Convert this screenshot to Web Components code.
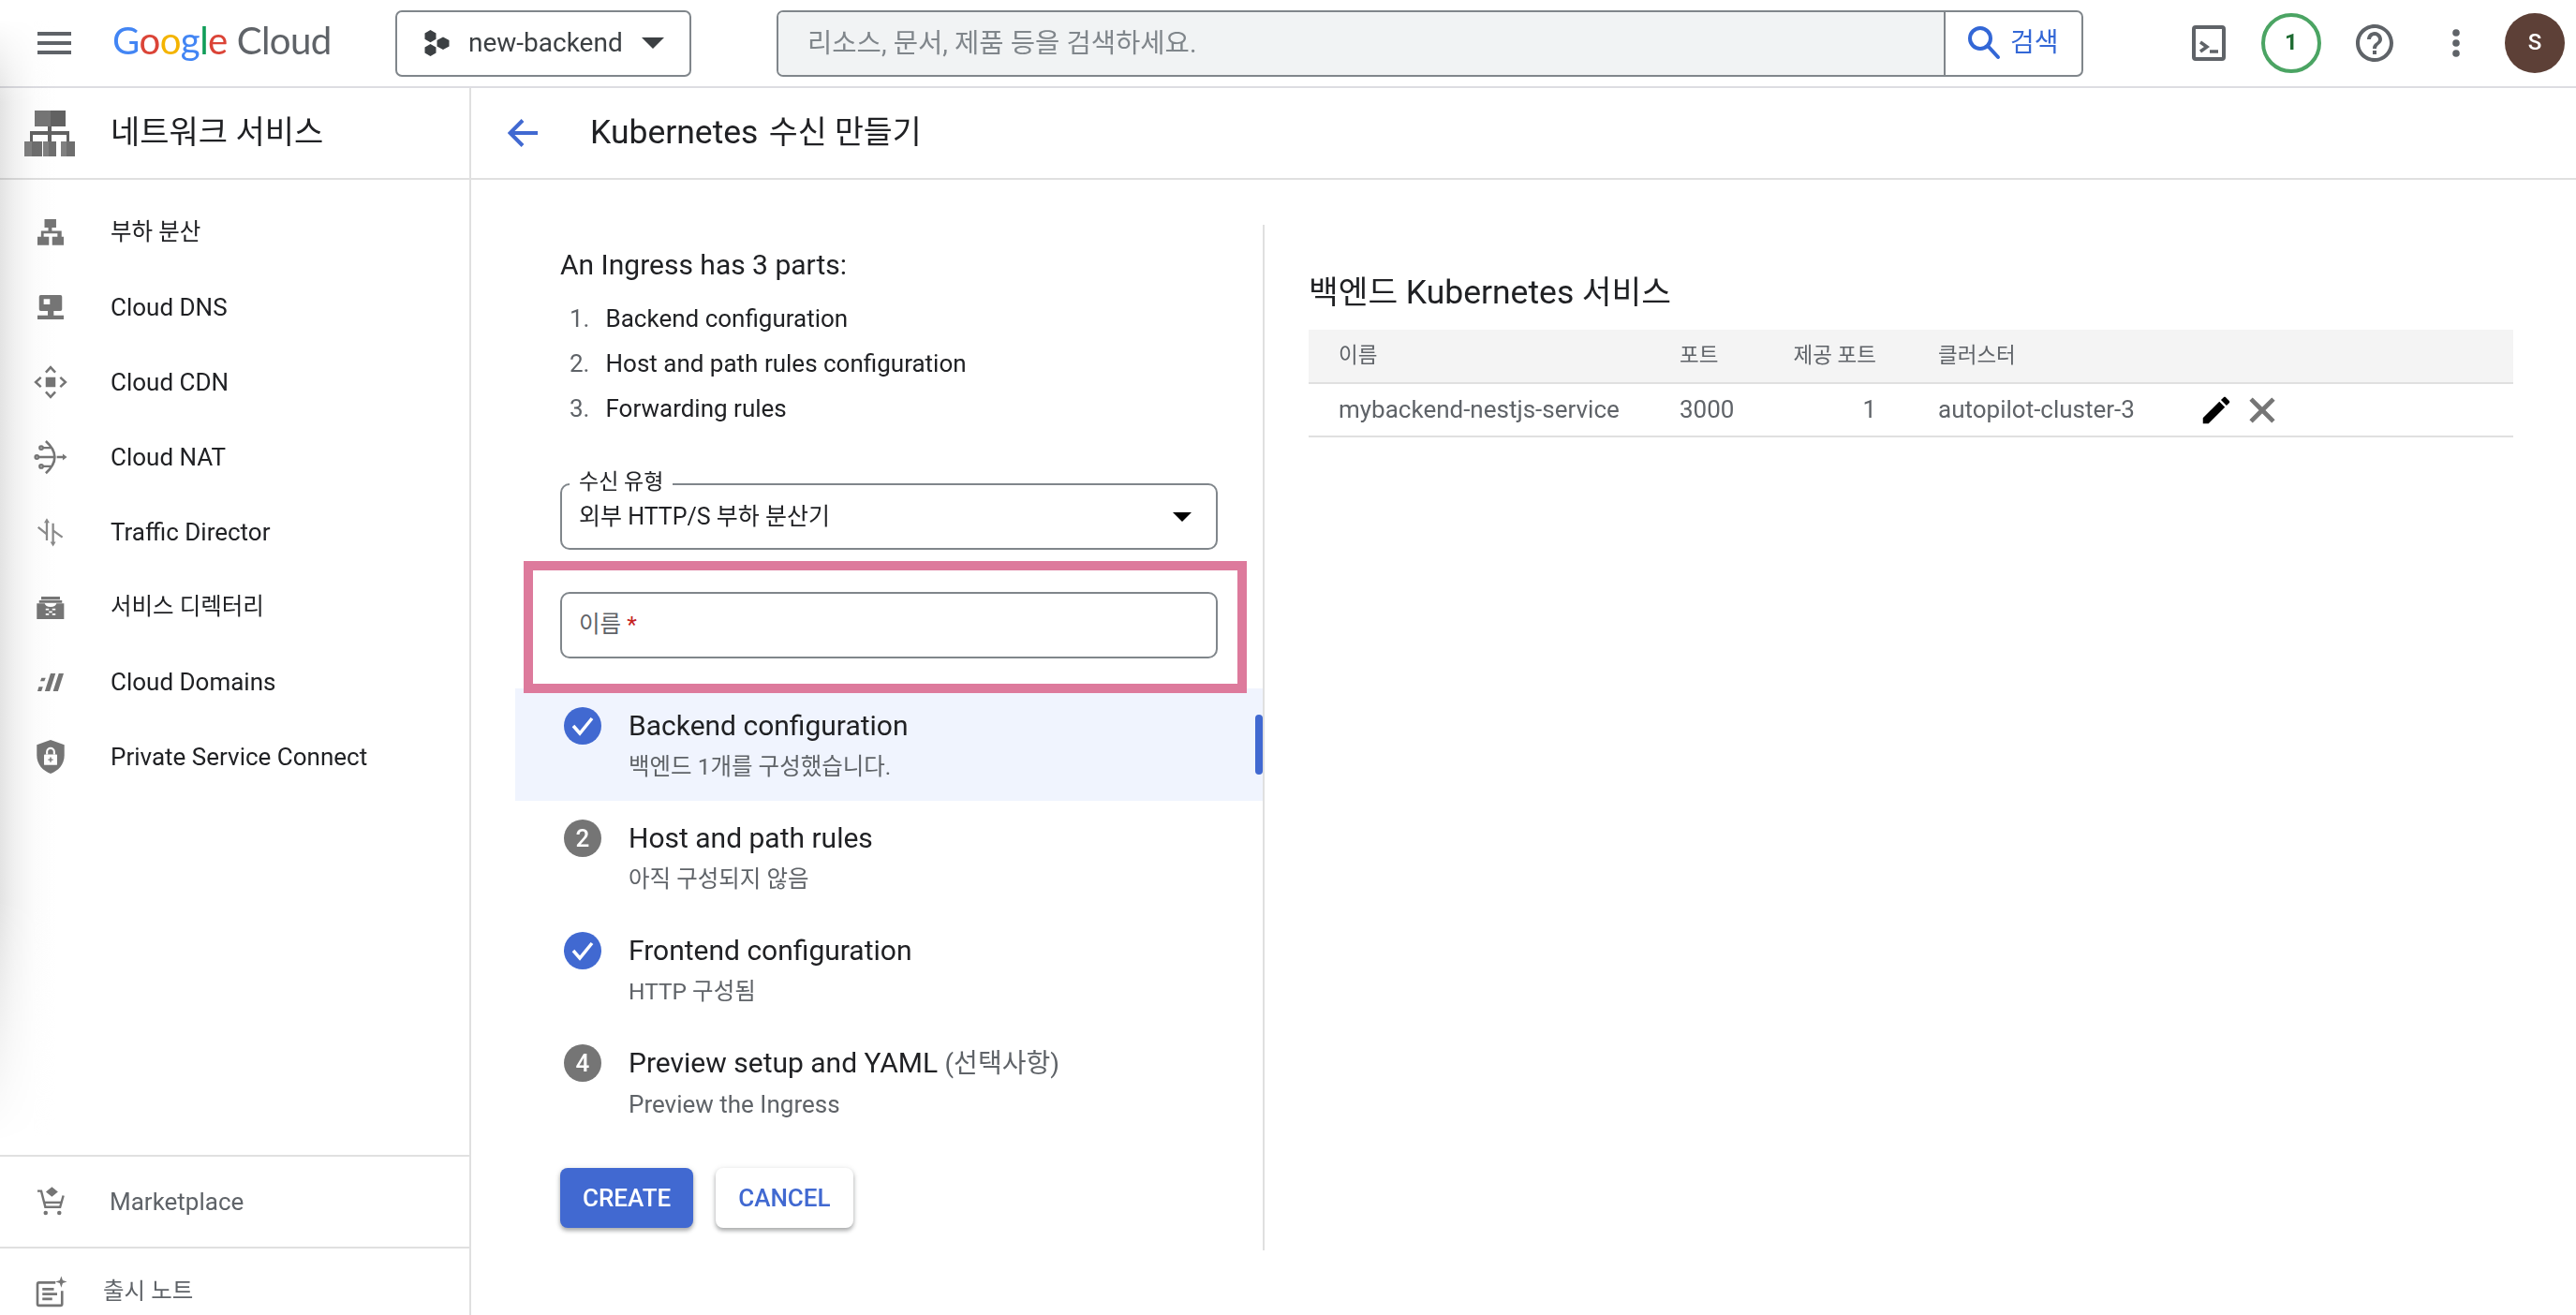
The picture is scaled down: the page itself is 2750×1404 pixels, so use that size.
<!DOCTYPE html>
<html lang="ko">
<head>
<meta charset="utf-8">
<title>Kubernetes 수신 만들기</title>
<style>
  html, body { margin: 0; padding: 0; background: #fff; overflow: hidden; }
  body { font: 400 26px/1.4 Roboto, "Noto Sans CJK KR", sans-serif; color: #202124; }
  svg[slot="icon"] { display: block; }
  .ko { font-size: 24.5px; }
</style>
</head>
<body>
<gc-app>
  <gc-topbar slot="top"></gc-topbar>
  <gc-sidebar slot="side">
    <gc-nav-item label="부하 분산" style="--fs:24.5px">
      <svg slot="icon" width="42" height="42" viewBox="0 0 24 24" fill="#757575"><path d="M8.3 4h7.1v5.1h-2.6v2h5.9v3.6H20v5.1h-7v-5.1h3.2v-2H7.8v2H11v5.1H4v-5.1h2.2v-3.6h4.4v-2H8.3z"/></svg>
    </gc-nav-item>
    <gc-nav-item label="Cloud DNS">
      <svg slot="icon" width="42" height="42" viewBox="0 0 24 24" fill="#757575"><path fill-rule="evenodd" d="M6 4.6h12a1 1 0 0 1 1 1v7.7a1 1 0 0 1-1 1h-4.1V17H20v2.4H4V17h6.3v-2.7H6a1 1 0 0 1-1-1V5.600a1 1 0 0 1 1-1zM7.800 7v3.300h3.800V7z"/></svg>
    </gc-nav-item>
    <gc-nav-item label="Cloud CDN">
      <svg slot="icon" width="42" height="42" viewBox="0 0 24 24" fill="none" stroke="#757575" stroke-width="1.4"><rect x="9" y="9" width="6" height="6" fill="#757575" stroke="none"/><path d="M9.100 6.100 12 2.900l2.900 3.200M9.100 17.900l2.900 3.200 2.900-3.200M6.100 9.100 2.900 12l3.200 2.900M17.900 9.100 21.100 12l-3.200 2.900"/></svg>
    </gc-nav-item>
    <gc-nav-item label="Cloud NAT">
      <svg slot="icon" width="42" height="42" viewBox="0 0 24 24" fill="none" stroke="#757575" stroke-width="1.3"><path d="M9.100 2.300Q19.900 12 9.100 21.900" stroke-width="1.500"/><path d="M7 6.300h5M4.300 12H14M7 17.700h5M15.800 12H20"/><circle cx="6.300" cy="6.300" r="1"/><circle cx="3.600" cy="12" r="1"/><circle cx="6.300" cy="17.700" r="1"/><path d="M19.400 10l2.600 2-2.600 2z" fill="#757575" stroke="none"/></svg>
    </gc-nav-item>
    <gc-nav-item label="Traffic Director">
      <svg slot="icon" width="42" height="42" viewBox="0 0 24 24" fill="none" stroke="#8a8a8a" stroke-width="1.3"><path d="M9.700 6v11.100M4.400 9.100l5.300 4.300M13.500 6.700V19M19.200 15.200l-5.300-3.800"/><path d="M9.700 3.600 8 6.400h3.400zM13.500 20.800l-1.700-2.800h3.400z" fill="#8a8a8a" stroke="none"/></svg>
    </gc-nav-item>
    <gc-nav-item label="서비스 디렉터리" style="--fs:24.5px">
      <svg slot="icon" width="42" height="42" viewBox="0 0 24 24"><path fill="#757575" d="M6.300 5.700h11.400v1.900H6.300zM5 8h14v1.500H5zM3.600 9.900h4.800c.3 1.400 1.600 2.100 3.600 2.100s3.300-.7 3.600-2.100h4.600v9.500H3.600z"/><path fill="#fff" d="M9 13h2v1H9zM13 13h2v1h-2zM11 14.500h2v1h-2zM9 16h2v1H9zM13 16h2v1h-2z"/></svg>
    </gc-nav-item>
    <gc-nav-item label="Cloud Domains">
      <svg slot="icon" width="42" height="42" viewBox="0 0 24 24" fill="#757575"><path d="M12 6.900h3l-3.500 10.800h-3zM17 6.900h3l-3.500 10.800h-3zM6.500 9.500H9l-.8 2H5.700zM4.800 15h2.500l-.9 2.700H4z"/></svg>
    </gc-nav-item>
    <gc-nav-item label="Private Service Connect">
      <svg slot="icon" width="42" height="42" viewBox="0 0 24 24"><path fill="#757575" d="M12 1.700l8.400 3V11c0 6-3.900 9.500-8.400 11.300C7.500 20.500 3.600 17 3.600 11V4.700z"/><path fill="none" stroke="#fff" stroke-width="1.200" d="M9.800 10.500V9a2.200 2.200 0 0 1 4.400 0v1.500"/><rect x="8" y="10.500" width="8" height="6.500" rx=".5" fill="#fff"/><path stroke="#757575" stroke-width=".8" d="M12 12.300v3M10.500 13.800h3"/></svg>
    </gc-nav-item>
    <gc-foot-item slot="foot" label="Marketplace" indent="42">
      <svg slot="icon" width="42" height="42" viewBox="0 0 24 24" fill="none" stroke="#757575" stroke-width="1.400"><path d="M4 5.500h2.300l2.500 9.800h9l2-7"/><path d="M8 12.500h10.500"/><path d="M12.800 3l3.700 3-3.700 3-3.700-3z" fill="#757575" stroke="none"/><circle cx="9" cy="18.800" r="1.300" fill="#757575" stroke="none"/><circle cx="17.300" cy="18.800" r="1.300" fill="#757575" stroke="none"/></svg>
    </gc-foot-item>
    <gc-foot-item slot="foot" label="출시 노트" indent="35" style="--fs:24.5px">
      <svg slot="icon" width="42" height="42" viewBox="0 0 24 24" fill="none" stroke="#757575" stroke-width="1.500"><path d="M15 6.500H5a1 1 0 0 0-1 1v12a1 1 0 0 0 1 1h13a1 1 0 0 0 1-1v-8"/><path d="M7 10.500h7M7 13.500h9M7 16.500h6"/><path d="M18.500 2.500l.9 2.600 2.600.9-2.600.9-.9 2.600-.9-2.600-2.600-.9 2.600-.9z" fill="#757575" stroke="none"/></svg>
    </gc-foot-item>
  </gc-sidebar>
  <gc-main slot="main">
    <gc-form-panel slot="form">
      <gc-intro>
        <span slot="title">An Ingress has 3 parts:</span>
        <gc-part number="1">Backend configuration</gc-part>
        <gc-part number="2">Host and path rules configuration</gc-part>
        <gc-part number="3">Forwarding rules</gc-part>
      </gc-intro>
      <gc-field label="수신 유형" dropdown>외부 HTTP/S 부하 분산기</gc-field>
      <gc-highlight>
        <gc-field hint>이름 <span style="color:#c5221f">*</span></gc-field>
      </gc-highlight>
      <gc-step state="done" active>
        <span slot="title">Backend configuration</span>
        <span slot="sub" class="ko">백엔드 1개를 구성했습니다.</span>
      </gc-step>
      <gc-step number="2">
        <span slot="title">Host and path rules</span>
        <span slot="sub" class="ko">아직 구성되지 않음</span>
      </gc-step>
      <gc-step state="done">
        <span slot="title">Frontend configuration</span>
        <span slot="sub" class="ko">HTTP 구성됨</span>
      </gc-step>
      <gc-step number="4">
        <span slot="title">Preview setup and YAML <span style="color:#5f6368;font-size:28px">(선택사항)</span></span>
        <span slot="sub">Preview the Ingress</span>
      </gc-step>
      <gc-actions>
        <gc-button primary>CREATE</gc-button>
        <gc-button>CANCEL</gc-button>
      </gc-actions>
    </gc-form-panel>
    <gc-services-table slot="detail">
      <span slot="heading">백엔드 <span style="font-size:35.5px">Kubernetes</span> 서비스</span>
      <gc-service-row name="mybackend-nestjs-service" port="3000" serving="1" cluster="autopilot-cluster-3"></gc-service-row>
    </gc-services-table>
  </gc-main>
</gc-app>

<script>
// every element is just a shadow root filled from static markup
class GcElement extends HTMLElement {
  constructor() {
    super();
    this.attachShadow({ mode: 'open' }).innerHTML = this.render();
  }
  render() { return ''; }
  attr(name, fallback = '') { return this.getAttribute(name) ?? fallback; }
}

class GcApp extends GcElement {
  render() {
    return `
      <style>
        :host { display: flex; flex-direction: column; position: relative; width: 2750px; height: 1404px; overflow: hidden; background: #fff; }
        .body { display: flex; flex: 1; min-height: 0; }
        .edge {
          position: absolute; left: 0; top: 20px; width: 64px; height: 1200px; pointer-events: none;
          background: linear-gradient(90deg, #e3e3e3 0, #f1f1f1 16px, #fbfbfb 36px, rgba(255,255,255,0) 60px);
          -webkit-mask-image: linear-gradient(180deg, transparent 0, #000 90px, #000 940px, transparent 1200px);
          mix-blend-mode: multiply;
        }
      </style>
      <slot name="top"></slot>
      <div class="body"><slot name="side"></slot><slot name="main"></slot></div>
      <div class="edge"></div>`;
  }
}

class GcTopbar extends GcElement {
  render() {
    return `
      <style>
        :host { display: flex; align-items: center; height: 92px; flex: none; border-bottom: 2px solid #dddde2; font-family: Roboto, "Noto Sans CJK KR", sans-serif; }
        svg { display: block; flex: none; }
        .menu { margin-left: 40px; }
        .logo { margin-left: 44px; width: 302px; flex: none; font: 400 40.2px/1 Lato, sans-serif; letter-spacing: -.6px; color: #5f6368; white-space: nowrap; padding-bottom: 5px; }
        .logo b { font-weight: 400; margin-right: 10px; }
        .picker { box-sizing: border-box; width: 316px; height: 71px; display: flex; align-items: center; border: 2px solid #80868b; border-radius: 7px; padding-left: 29px; font-size: 28px; color: #3c4043; }
        .picker span { margin-left: 20px; width: 185px; }
        .search { box-sizing: border-box; margin-left: 91px; width: 1395px; height: 71px; display: flex; border: 2px solid #80868b; border-radius: 7px; overflow: hidden; }
        .input { flex: 1; background: #f1f3f4; border-right: 2px solid #80868b; display: flex; align-items: center; padding-left: 31px; font-size: 28.6px; color: #80868b; }
        .go { width: 145px; display: flex; align-items: center; padding-left: 23px; box-sizing: border-box; color: #3367d6; font-size: 28px; }
        .go svg { margin-right: 10px; }
        .icons { display: flex; align-items: center; margin-left: 116px; }
        .badge { box-sizing: border-box; width: 64px; height: 64px; margin-left: 38px; border: 4px solid #4ba463; border-radius: 50%; display: flex; align-items: center; justify-content: center; font-size: 24px; font-weight: 700; color: #1e6b32; }
        .help { margin-left: 33px; }
        .more { margin-left: 59px; }
        .avatar { width: 64px; height: 64px; margin-left: 48px; border-radius: 50%; background: #5d4037; color: #fff; display: flex; align-items: center; justify-content: center; font-size: 24px; font-weight: 500; }
      </style>
      <svg class="menu" width="36" height="24" viewBox="0 0 36 24" fill="#5f6368"><path d="M0 0h36v4H0zM0 10h36v4H0zM0 20h36v4H0z"/></svg>
      <div class="logo"><b><span style="color:#4285f4">G</span><span style="color:#db4437">o</span><span style="color:#f4b400">o</span><span style="color:#4285f4">g</span><span style="color:#0f9d58">l</span><span style="color:#db4437">e</span></b>Cloud</div>
      <div class="picker">
        <svg width="27" height="28" viewBox="0 0 27 28" fill="#3c4043"><path d="M6.500 0l6 3.400v6.400l-6 3.400-6-3.400V3.400zM6.500 15l6 3.400v6.200l-6 3.400-6-3.400v-6.200zM20 7.500l6.500 3.500v6.500L20 21l-6.500-3.500V11z"/></svg>
        <span>new-backend</span>
        <svg width="24" height="12" viewBox="0 0 24 12" fill="#3c4043"><path d="M0 0h24L12 12z"/></svg>
      </div>
      <div class="search">
        <div class="input">리소스, 문서, 제품 등을 검색하세요.</div>
        <div class="go">
          <svg width="36" height="38" viewBox="0 0 36 38" fill="none" stroke="#3367d6" stroke-width="4"><circle cx="14" cy="14" r="11"/><path d="M22 22l11 12" stroke-linecap="round"/></svg>
          검색
        </div>
      </div>
      <div class="icons">
        <svg width="36" height="38" viewBox="0 0 36 38" fill="none" stroke="#5f6368" stroke-width="4"><rect x="2" y="2" width="32" height="34" rx="2"/><path d="M9 18l7 5-7 5" stroke-width="3.500"/><path d="M19 28h9" stroke-width="3.500"/></svg>
        <div class="badge">1</div>
        <svg class="help" width="48" height="48" viewBox="0 0 24 24" fill="#5f6368"><path d="M11 18h2v-2h-2v2zm1-16C6.480 2 2 6.480 2 12s4.480 10 10 10 10-4.480 10-10S17.520 2 12 2zm0 18c-4.410 0-8-3.590-8-8s3.590-8 8-8 8 3.590 8 8-3.590 8-8 8zm0-14c-2.210 0-4 1.790-4 4h2c0-1.100.9-2 2-2s2 .9 2 2c0 2-3 1.750-3 5h2c0-2.250 3-2.500 3-5 0-2.210-1.790-4-4-4z"/></svg>
        <svg class="more" width="8" height="30" viewBox="0 0 8 30" fill="#5f6368"><circle cx="4" cy="4" r="3.800"/><circle cx="4" cy="15" r="3.800"/><circle cx="4" cy="26" r="3.800"/></svg>
        <div class="avatar">S</div>
      </div>`;
  }
}

class GcSidebar extends GcElement {
  render() {
    return `
      <style>
        :host { display: flex; flex-direction: column; flex: none; width: 503px; box-sizing: border-box; border-right: 2px solid #e0e0e0; }
        header { display: flex; align-items: center; height: 96px; flex: none; border-bottom: 2px solid #e0e0e0; padding-left: 26px; font-size: 34px; color: #202124; }
        header svg { display: block; margin-right: 38px; }
        nav { flex: 1; padding-top: 16px; }
        footer { flex: none; height: 171px; overflow: hidden; }
      </style>
      <header>
        <svg width="54" height="49" viewBox="0 0 54 49"><path fill="#616161" d="M11 0h33v17H11z"/><path fill="#757575" d="M11 0h17v17H11z"/><path fill="#616161" d="M25 17h4v5h19v11h-3v-7H29v7h-4v-7H9v7H6V22h19z"/><path fill="#6e6e6e" d="M0 33h19v16H0zM20 33h14v16H20zM39 33h15v16H39z"/><path fill="#808080" d="M0 33h8v16H0zM20 33h6v16h-6zM39 33h6v16h-6z"/></svg>
        네트워크 서비스
      </header>
      <nav><slot></slot></nav>
      <footer><slot name="foot"></slot></footer>`;
  }
}

class GcNavItem extends GcElement {
  render() {
    return `
      <style>
        :host { display: flex; align-items: center; height: 80px; padding-left: 33px; color: #202124; font-size: var(--fs, 26px); }
        .label { margin-left: 43px; }
      </style>
      <slot name="icon"></slot><span class="label">${this.attr('label')}</span>`;
  }
}

class GcFootItem extends GcElement {
  render() {
    return `
      <style>
        :host { display: flex; align-items: center; height: 96px; padding-left: 33px; border-top: 2px solid #e0e0e0; color: #5f6368; font-size: var(--fs, 26px); }
        :host(:last-child) { height: 92px; }
        .label { margin-left: ${this.attr('indent', '43')}px; }
      </style>
      <slot name="icon"></slot><span class="label">${this.attr('label')}</span>`;
  }
}

class GcMain extends GcElement {
  render() {
    return `
      <style>
        :host { display: flex; flex-direction: column; flex: 1; min-width: 0; }
        header { display: flex; align-items: center; height: 96px; flex: none; border-bottom: 2px solid #e0e0e0; padding-left: 39px; font-size: 33.6px; color: #202124; white-space: pre; }
        header svg { display: block; margin-right: 56px; }
        .k8s { font-size: 35.5px; margin-right: 3px; }
        .columns { display: flex; flex: 1; min-height: 0; padding: 48px 0 0 47px; }
      </style>
      <header>
        <svg width="32" height="30" viewBox="0 0 32 30" fill="none" stroke="#4169d1" stroke-width="4"><path d="M32 15H3M16 1.500 2.500 15 16 28.500"/></svg>
        <span><span class="k8s">Kubernetes</span> 수신 만들기</span>
      </header>
      <div class="columns"><slot name="form"></slot><slot name="detail"></slot></div>`;
  }
}

class GcFormPanel extends GcElement {
  render() {
    return `
      <style>
        :host { display: block; flex: none; width: 800px; height: 1095px; box-sizing: border-box; border-right: 2px solid #e0e0e0; }
      </style>
      <slot></slot>`;
  }
}

class GcIntro extends GcElement {
  render() {
    return `
      <style>
        :host { display: block; padding: 23px 0 0 48px; margin-bottom: 56px; }
        .title { font-size: 30px; line-height: 40px; color: #202124; margin-bottom: 13px; }
      </style>
      <div class="title"><slot name="title"></slot></div>
      <slot></slot>`;
  }
}

class GcPart extends GcElement {
  render() {
    return `
      <style>
        :host { display: flex; height: 48px; align-items: center; padding-left: 10px; font-size: 26px; color: #202124; }
        .n { width: 38.5px; flex: none; color: #5f6368; }
      </style>
      <span class="n">${this.attr('number')}.</span><slot></slot>`;
  }
}

class GcField extends GcElement {
  render() {
    const label = this.attr('label');
    const arrow = this.hasAttribute('dropdown')
      ? '<svg width="20" height="10" viewBox="0 0 20 10" fill="#000"><path d="M0 0h20L10 10z"/></svg>' : '';
    return `
      <style>
        :host { display: flex; align-items: center; justify-content: space-between; position: relative; box-sizing: border-box; width: 702px; height: 71px; margin-left: 48px; padding: 0 26px 0 18px; border: 2px solid #80868b; border-radius: 10px; font-size: 25px; color: #202124; }
        :host([hint]) { color: #5f6368; margin-left: 0; font-size: 24.5px; }
        .label { position: absolute; left: 8px; top: -16px; padding: 0 10px; background: #fff; font-size: 23px; line-height: 26px; }
      </style>
      ${label ? `<span class="label">${label}</span>` : ''}
      <span><slot></slot></span>${arrow}`;
  }
}

class GcHighlight extends GcElement {
  render() {
    return `
      <style>
        :host { display: block; position: relative; z-index: 1; box-sizing: border-box; width: 772px; height: 141px; margin: 12px 0 -5px 9px; padding: 23px 0 0 29px; border: 10px solid #dd7a9c; background: #fff; }
      </style>
      <slot></slot>`;
  }
}

class GcStep extends GcElement {
  render() {
    const done = this.attr('state') === 'done';
    const badge = done
      ? '<svg width="26" height="22" viewBox="0 0 26 22" fill="none" stroke="#fff" stroke-width="3.500"><path d="M3 11l7 8L23 3"/></svg>'
      : this.attr('number');
    return `
      <style>
        :host { display: flex; position: relative; box-sizing: border-box; height: 120px; padding: 20px 0 0 52px; }
        :host([active]) { background: #f0f4fe; }
        :host([active])::after { content: ""; position: absolute; right: 0; top: 28px; width: 8px; height: 64px; border-radius: 4px; background: #4169d1; }
        .badge { width: 40px; height: 40px; flex: none; border-radius: 50%; background: ${done ? '#4169d1' : '#757575'}; color: #fff; display: flex; align-items: center; justify-content: center; font-size: 26px; font-weight: 500; margin-right: 29px; }
        .title { font-size: 30px; line-height: 40px; color: #202124; }
        .sub { font-size: 26px; line-height: 40px; margin-top: 3px; color: #5f6368; }
      </style>
      <div class="badge">${badge}</div>
      <div><div class="title"><slot name="title"></slot></div><div class="sub"><slot name="sub"></slot></div></div>`;
  }
}

class GcActions extends GcElement {
  render() {
    return `
      <style>
        :host { display: flex; gap: 24px; padding: 32px 0 0 48px; }
      </style>
      <slot></slot>`;
  }
}

class GcButton extends GcElement {
  render() {
    return `
      <style>
        :host { display: flex; align-items: center; height: 64px; padding: 0 24px; border-radius: 8px; background: #fff; color: #4169d1; font-size: 26px; font-weight: 500; box-shadow: 0 3px 4px rgba(60,64,67,.38), 0 1px 6px rgba(60,64,67,.14); }
        :host([primary]) { background: #4169d1; color: #fff; }
      </style>
      <slot></slot>`;
  }
}

class GcServicesTable extends GcElement {
  render() {
    return `
      <style>
        :host { display: block; flex: 1; min-width: 0; padding: 52px 67px 0 47px; }
        h2 { margin: 0 0 20px; font-size: 34.5px; font-weight: 400; line-height: 40px; color: #202124; }
        .head { display: grid; grid-template-columns: 396px 100px 110px 346px 1fr; align-items: center; height: 56px; background: #f4f4f4; border-bottom: 2px solid #e0e0e0; font-size: 22.5px; color: #5f6368; }
        .head span:first-child { padding-left: 32px; }
        .right { text-align: right; }
        .pad { padding-left: 66px; }
      </style>
      <h2><slot name="heading"></slot></h2>
      <div class="head"><span>이름</span><span>포트</span><span class="right">제공 포트</span><span class="pad">클러스터</span><span></span></div>
      <slot></slot>`;
  }
}

class GcServiceRow extends GcElement {
  render() {
    return `
      <style>
        :host { display: grid; grid-template-columns: 396px 100px 110px 346px 1fr; align-items: center; height: 57px; box-sizing: border-box; border-bottom: 2px solid #e0e0e0; font-size: 26px; color: #5f6368; }
        .name { padding-left: 32px; white-space: nowrap; }
        .right { text-align: right; }
        .pad { padding-left: 66px; }
        .tools { display: flex; align-items: center; gap: 8px; margin-left: -2px; }
        svg { display: block; }
      </style>
      <span class="name">${this.attr('name')}</span>
      <span>${this.attr('port')}</span>
      <span class="right">${this.attr('serving')}</span>
      <span class="pad">${this.attr('cluster')}</span>
      <div class="tools">
        <svg width="38" height="38" viewBox="0 0 24 24" fill="#000"><path d="M3 17.250V21h3.750L17.810 9.940l-3.750-3.750L3 17.250zM20.710 7.040c.39-.39.39-1.020 0-1.410l-2.340-2.340c-.39-.39-1.020-.39-1.410 0l-1.830 1.830 3.750 3.750 1.830-1.830z"/></svg>
        <svg width="44" height="44" viewBox="0 0 24 24" fill="#757575" stroke="#757575" stroke-width=".6"><path d="M19 6.410L17.590 5 12 10.590 6.410 5 5 6.410 10.590 12 5 17.590 6.410 19 12 13.410 17.590 19 19 17.590 13.410 12z"/></svg>
      </div>`;
  }
}

customElements.define('gc-app', GcApp);
customElements.define('gc-topbar', GcTopbar);
customElements.define('gc-sidebar', GcSidebar);
customElements.define('gc-nav-item', GcNavItem);
customElements.define('gc-foot-item', GcFootItem);
customElements.define('gc-main', GcMain);
customElements.define('gc-form-panel', GcFormPanel);
customElements.define('gc-intro', GcIntro);
customElements.define('gc-part', GcPart);
customElements.define('gc-field', GcField);
customElements.define('gc-highlight', GcHighlight);
customElements.define('gc-step', GcStep);
customElements.define('gc-actions', GcActions);
customElements.define('gc-button', GcButton);
customElements.define('gc-services-table', GcServicesTable);
customElements.define('gc-service-row', GcServiceRow);
</script>
</body>
</html>
